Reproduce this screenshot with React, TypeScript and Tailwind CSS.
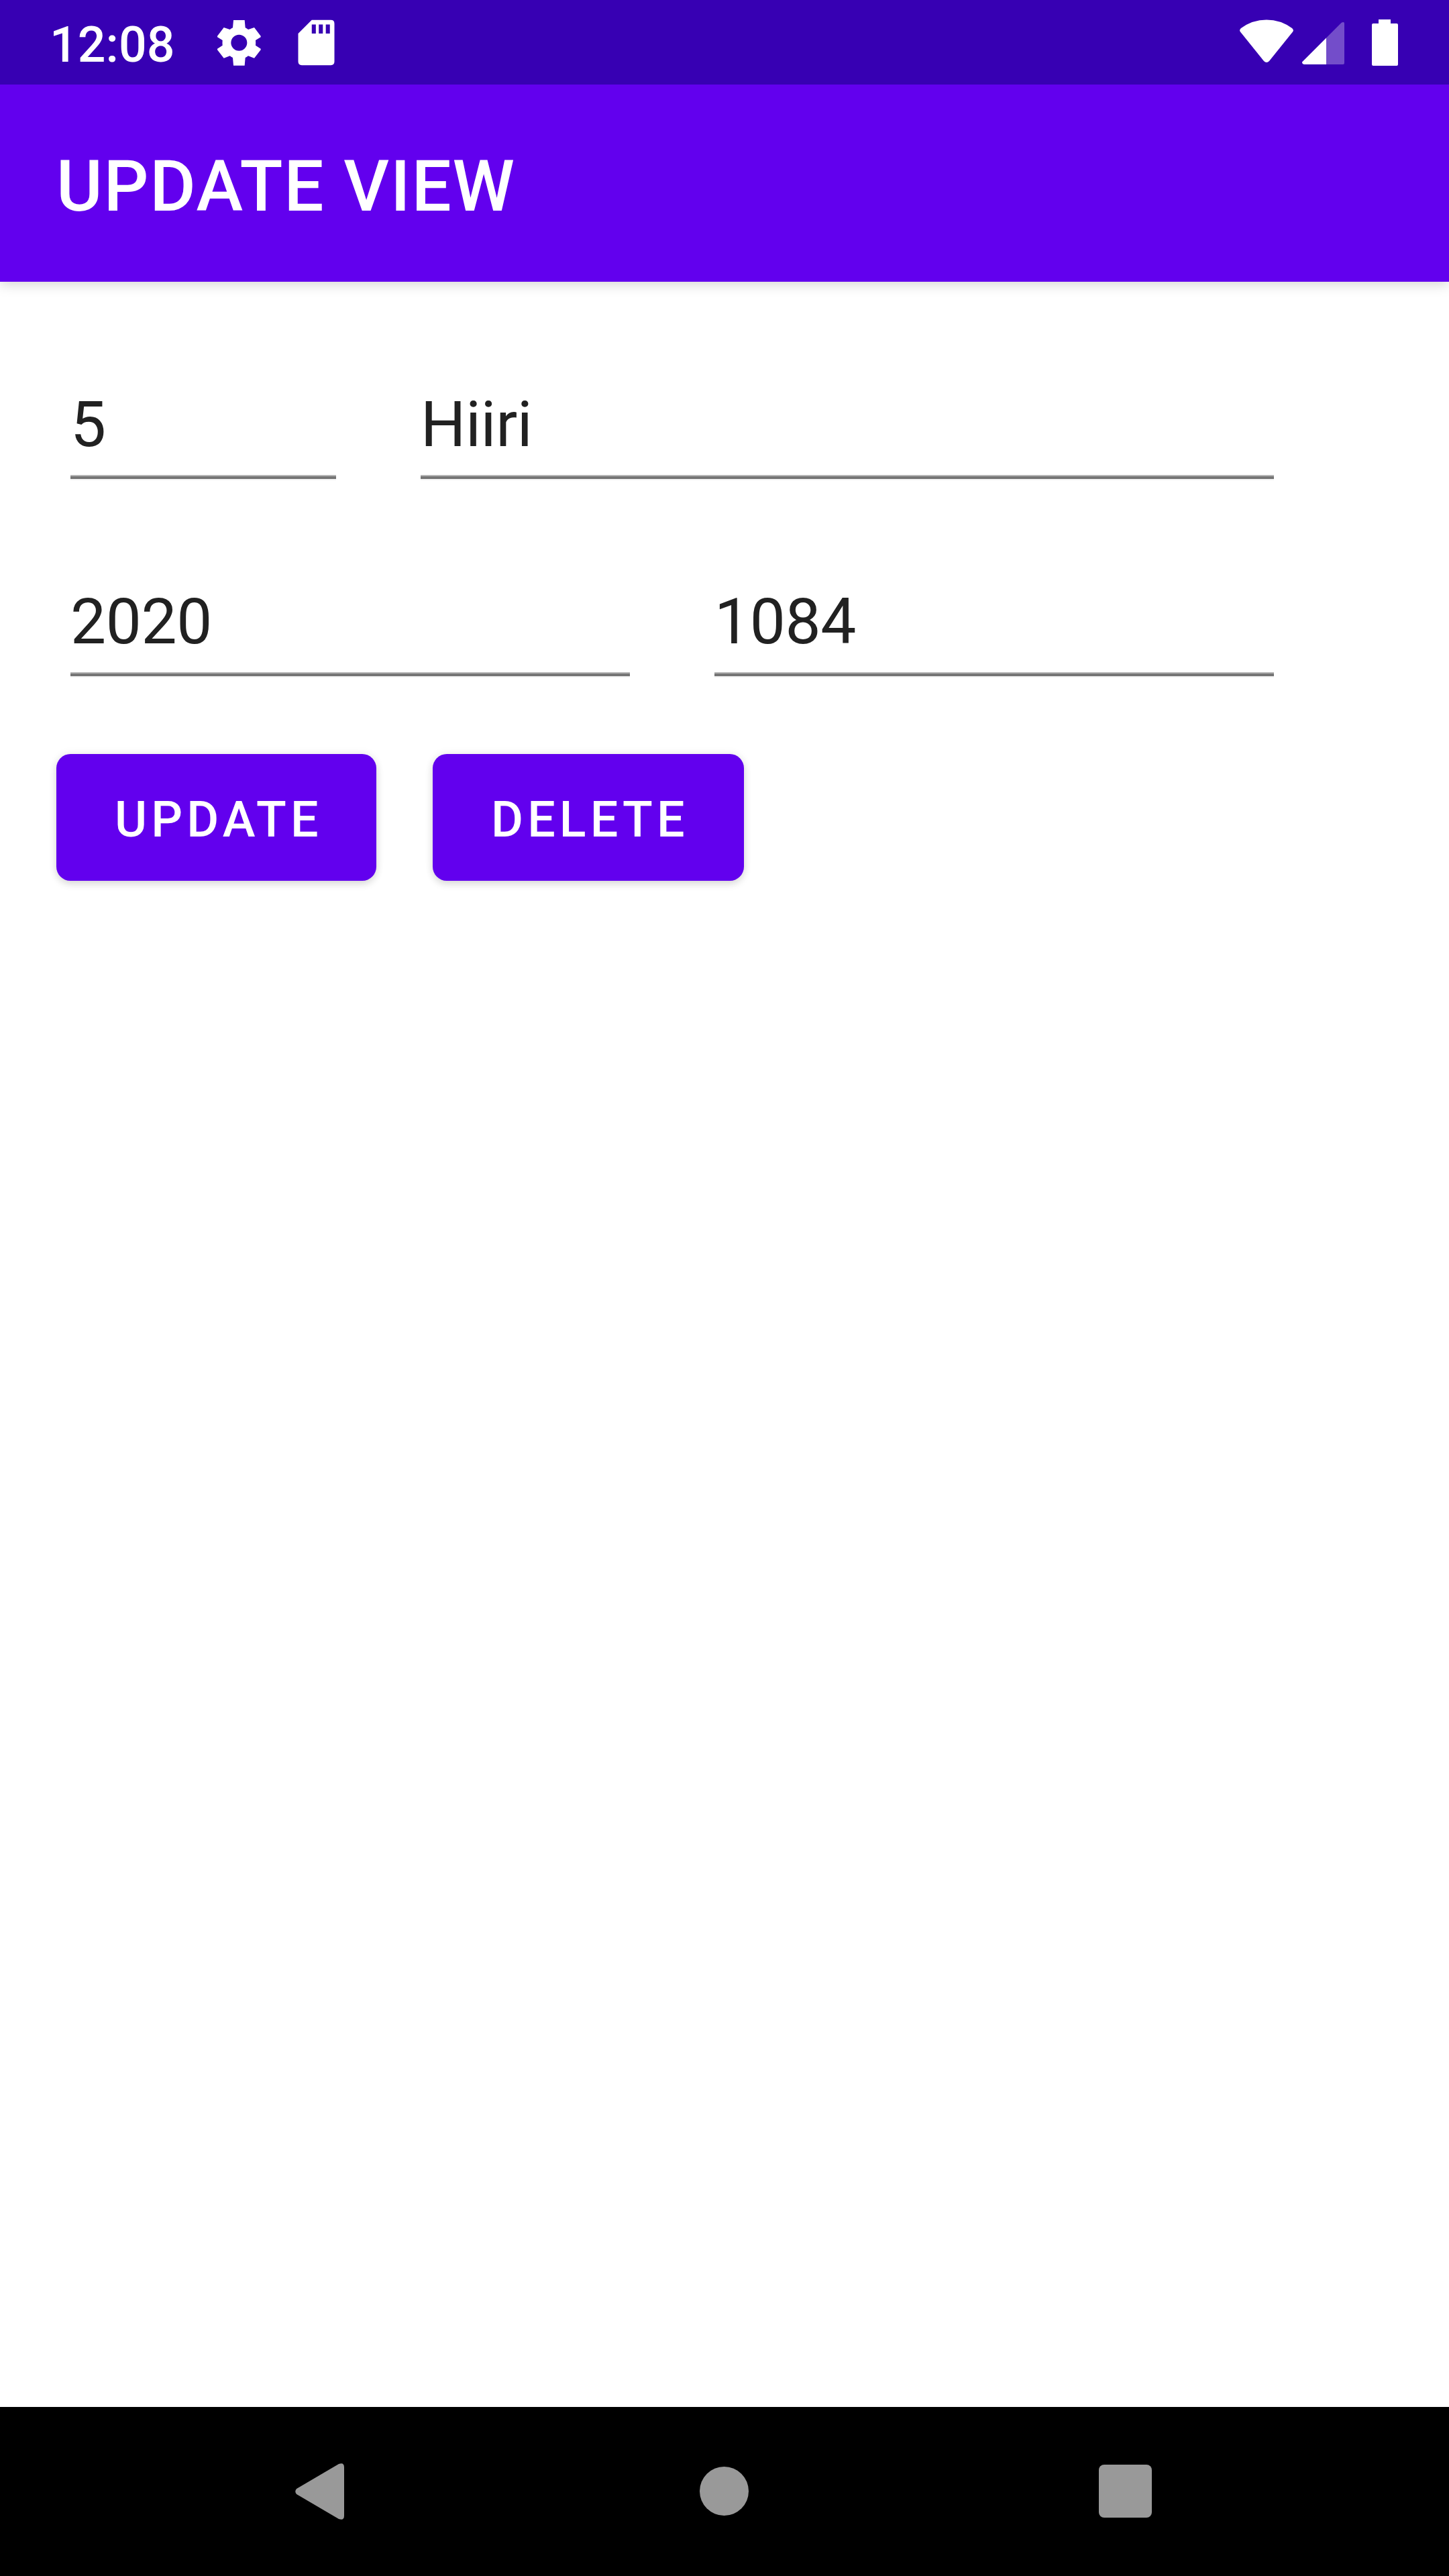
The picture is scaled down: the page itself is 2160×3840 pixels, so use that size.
function StatusBar() {
  return (
    <header className="relative z-10 flex h-[126px] items-start justify-between bg-[#3700b3] text-white">
      <div className="flex items-start">
        <span className="ml-[74px] mt-[8px] w-[236px] text-[73.5px] leading-[118px] font-medium">12:08</span>
        <svg className="mt-[20px] size-[90px]" viewBox="0 0 270 270" fill="currentColor" fillRule="evenodd" aria-hidden="true">
          <path d="M114 30H164L167 64Q174 67 180 72L207 63 236 101V106L213 120Q214 131 213 143L236 158V163L207 200 180 190Q174 195 167 198L164 233H114L111 198Q104 195 98 190L71 200 42 163V158L65 143Q64 131 65 120L42 106V101L71 63 98 72Q104 67 111 64ZM139 95A36 36 0 1 0 139 167 36 36 0 1 0 139 95Z" />
        </svg>
        <svg className="ml-[31px] mt-[23px] size-[81px]" viewBox="0 0 24 24" fill="currentColor" aria-hidden="true">
          <path d="M18.400 2H10L4 8V20.400Q4 22 5.600 22H18.400Q20 22 20 20.400V3.600Q20 2 18.400 2zM11.800 8H10V4h1.800zM14.900 8H13.100V4h1.800zM18 8H16.200V4H18z" />
        </svg>
      </div>
      <div className="mr-[76px] flex items-start">
        <svg className="mt-[29px] h-[64px] w-[80px]" viewBox="0 0 80 64" fill="currentColor" aria-hidden="true">
          <path d="M2 13Q19 .5 40 .5T78 13Q81 15.500 79 18.500L44 62Q40 66 36 62L1 18.500Q-1 15.500 2 13Z" />
        </svg>
        <svg className="ml-[13px] mt-[33px] size-[63px]" viewBox="0 0 63 63" fill="currentColor" aria-hidden="true">
          <path d="M36 23.500 58.500 1Q60 0 61.500 0 63 0 63 2V61Q63 63 61 63H36Z" opacity=".3" />
          <path d="M36 23.500V63H3Q0 62.500 0 59.500Z" />
        </svg>
        <svg className="ml-[41px] mt-[29px] h-[69px] w-[39px]" viewBox="0 0 39 69" fill="currentColor" aria-hidden="true">
          <path d="M10 0H28V6H37Q39 6 39 8V67Q39 69 37 69H2Q0 69 0 67V8Q0 6 2 6H10Z" />
        </svg>
      </div>
    </header>
  );
}

function Field({ value, width }: { value: string; width: string }) {
  return (
    <div className={width}>
      <div className="h-[138px] text-[94.5px] leading-[126px] tracking-[-0.4px] text-[#212121]">{value}</div>
      <div className="h-[8px] bg-[linear-gradient(#b5b5b5_0_2px,#757575_2px_6px,#f3f3f3_6px_8px)]" />
    </div>
  );
}

function Button({ label, width }: { label: string; width: string }) {
  return (
    <button
      className={`${width} h-[189px] rounded-[21px] bg-[#6200ee] pt-[7px] pl-[87px] text-left text-[73.5px] leading-[182px] font-medium tracking-[6.15px] whitespace-nowrap text-white shadow-[0_5px_12px_rgba(0,0,0,0.12),0_0_14px_rgba(0,0,0,0.07)]`}
    >
      {label}
    </button>
  );
}

export default function App() {
  return (
    <div className="flex h-[3840px] w-[2160px] flex-col bg-white font-['Roboto',sans-serif]">
      <StatusBar />
      <div className="h-[294px] bg-[#6200ee] pt-[11px] pl-[84px] text-[105px] leading-[283px] font-medium tracking-[1.8px] text-white shadow-[0_4px_18px_rgba(0,0,0,0.17)]">
        UPDATE VIEW
      </div>
      <main className="flex flex-1 flex-col pt-[150px]">
        <div className="flex gap-[126px] pl-[105px]">
          <Field value="5" width="w-[396px]" />
          <Field value="Hiiri" width="w-[1272px]" />
        </div>
        <div className="mt-[148px] flex gap-[126px] pl-[105px]">
          <Field value="2020" width="w-[834px]" />
          <Field value="1084" width="w-[834px]" />
        </div>
        <div className="mt-[114px] flex gap-[84px] pl-[84px]">
          <Button label="UPDATE" width="w-[477px]" />
          <Button label="DELETE" width="w-[464px]" />
        </div>
      </main>
      <nav className="flex h-[252px] items-start bg-black text-[#999999]">
        <svg className="mt-[84px] ml-[440px] h-[84px] w-[73px]" viewBox="0 0 73 84" fill="currentColor" aria-hidden="true">
          <path d="M2 38 65 1Q73-2 73 6V78Q73 86 65 83L2 46Q-1.500 42 2 38Z" />
        </svg>
        <div className="mt-[89px] ml-[530px] size-[73px] rounded-full bg-current" />
        <div className="mt-[86px] ml-[521.5px] size-[79px] rounded-[8px] bg-current" />
      </nav>
    </div>
  );
}
